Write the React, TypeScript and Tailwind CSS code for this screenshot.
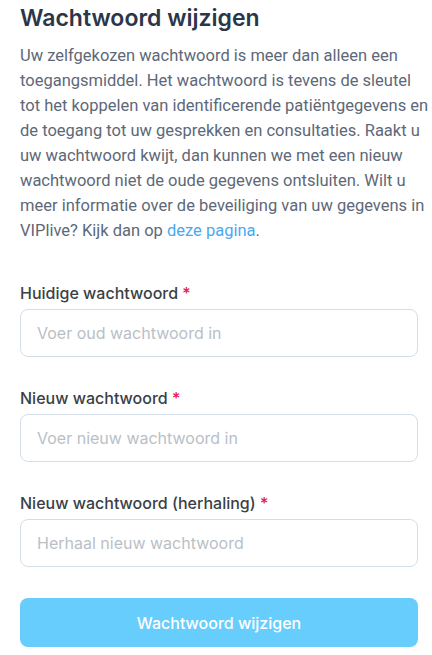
const fields = [
  { label: "Huidige wachtwoord", placeholder: "Voer oud wachtwoord in" },
  { label: "Nieuw wachtwoord", placeholder: "Voer nieuw wachtwoord in" },
  { label: "Nieuw wachtwoord (herhaling)", placeholder: "Herhaal nieuw wachtwoord" },
]

const App = () => {
  return (
    <div className="min-h-screen bg-white pl-5 pr-[14px] pt-[2px] font-['Inter',sans-serif]">
      <h1 className="text-[23px] font-semibold leading-[32px] text-[#2b3648]">Wachtwoord wijzigen</h1>

      {/* explicit breaks so the lines wrap as in the app */}
      <p className="mt-[9px] mr-[-12px] whitespace-nowrap font-['Roboto',sans-serif] text-[16.5px] leading-[25px] text-[#5d6878]">
        Uw zelfgekozen wachtwoord is meer dan alleen een
        <br />
        toegangsmiddel. Het wachtwoord is tevens de sleutel
        <br />
        tot het koppelen van identificerende patiëntgegevens en
        <br />
        de toegang tot uw gesprekken en consultaties. Raakt u
        <br />
        uw wachtwoord kwijt, dan kunnen we met een nieuw
        <br />
        wachtwoord niet de oude gegevens ontsluiten. Wilt u
        <br />
        meer informatie over de beveiliging van uw gegevens in
        <br />
        VIPlive? Kijk dan op <a className="text-[#4aa8ee]">deze pagina</a>.
      </p>

      <form className="mt-[38px] flex flex-col gap-[29px]">
        {fields.map((f) => (
          <div key={f.label} className="flex flex-col gap-1">
            <label className="text-[16px] font-medium leading-6 text-[#3a3f46]">
              {f.label} <span className="text-[#e8174a]">*</span>
            </label>
            <input
              type="password"
              placeholder={f.placeholder}
              className="h-12 w-full rounded-lg border border-[#d4dee8] bg-white px-4 text-[16px] outline-none placeholder:text-[#b9bfc6]"
            />
          </div>
        ))}

        <button
          type="button"
          className="mt-[2px] h-[49px] w-full rounded-lg bg-[#67cdfd] text-[16px] font-medium text-white"
        >
          Wachtwoord wijzigen
        </button>
      </form>
    </div>
  )
}

export default App
